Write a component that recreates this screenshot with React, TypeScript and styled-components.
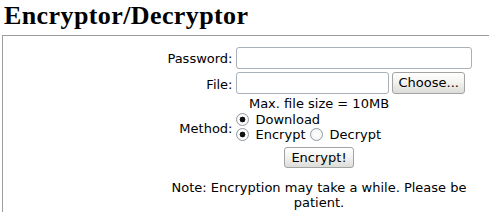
import React from 'react';
import styled, { createGlobalStyle } from 'styled-components';

const GlobalStyle = createGlobalStyle`
  html, body {
    margin: 0;
    padding: 0;
    background: #fff;
    overflow: hidden;
  }
  body {
    font-family: "DejaVu Sans", Verdana, sans-serif;
    font-size: 13px;
    color: #000;
  }
`;

const Page = styled.div`
  padding: 1px 0 0 2px;
`;

const Title = styled.h1`
  margin: 0 0 4px 2px;
  font-family: "Liberation Serif", "Times New Roman", serif;
  font-size: 26px;
  font-weight: bold;
  letter-spacing: 0.4px;
  line-height: 30px;
`;

const Panel = styled.div`
  width: 634px;
  height: 177px;
  border: 1px solid #9c9c9c;
  border-bottom: none;
  padding-top: 11px;
  box-sizing: border-box;
`;

const FormGrid = styled.form`
  display: grid;
  grid-template-columns: auto 236px;
  column-gap: 3px;
  justify-content: center;
  width: 305px;
  margin: 0 auto;
`;

const Label = styled.label<{ $top?: number }>`
  align-self: center;
  text-align: right;
  line-height: 15px;
  white-space: nowrap;
  margin-top: ${p => p.$top ?? 0}px;
  padding-top: ${p => (p.$top ? 2 : 0)}px;
`;

const TextInput = styled.input<{ $width?: number }>`
  box-sizing: border-box;
  width: ${p => (p.$width ? `${p.$width}px` : '100%')};
  height: 22px;
  margin: 0;
  padding: 1px 3px;
  border: 1px solid #a9b0b8;
  border-radius: 3px;
  background: #fff;
  font: inherit;
`;

const FieldRow = styled.div<{ $top?: number }>`
  display: flex;
  gap: 3px;
  margin-top: ${p => p.$top ?? 0}px;
`;

const Button = styled.button`
  box-sizing: border-box;
  height: 22px;
  margin: 0;
  padding: 0 6px;
  border: 1px solid #a3a3a3;
  border-radius: 3px;
  background: linear-gradient(#ffffff 0%, #f3f3f1 45%, #dcdcd8 100%);
  font: inherit;
  color: #000;
  line-height: 18px;
`;

const FileButton = styled(Button)`
  width: 73px;
`;

const Spanning = styled.div<{ $top?: number }>`
  grid-column: 1 / -1;
  text-align: center;
  line-height: 15px;
  margin-top: ${p => p.$top ?? 0}px;
`;

const RadioGroup = styled.div`
  margin-top: 1px;
`;

const RadioLine = styled.div`
  display: flex;
  align-items: center;
  height: 15px;
  white-space: nowrap;
`;

const Radio = styled.input.attrs({ type: 'radio' })`
  appearance: none;
  box-sizing: border-box;
  width: 13px;
  height: 13px;
  margin: 0 7px 0 0;
  border: 1px solid #8e99a4;
  border-radius: 50%;
  background: radial-gradient(circle, #fff 0%, #f4f4f4 70%, #dcdcdc 100%);

  &:checked {
    background: radial-gradient(circle, #111 0, #111 2.6px, #fff 3.2px, #f0f0f0 100%);
  }
`;

const RadioText = styled.span`
  margin-right: 4px;
`;

const SubmitButton = styled(Button)`
  height: 21px;
`;

const Note = styled(Spanning)`
  margin-top: 12px;
`;

export default function App() {
  return (
    <>
      <GlobalStyle />
      <Page>
        <Title>Encryptor/Decryptor</Title>
        <Panel>
          <FormGrid onSubmit={e => e.preventDefault()}>
            <Label htmlFor="pw">Password:</Label>
            <TextInput id="pw" type="password" />

            <Label htmlFor="file" $top={3}>File:</Label>
            <FieldRow $top={3}>
              <TextInput id="file" $width={153} readOnly />
              <FileButton type="button">Choose...</FileButton>
            </FieldRow>

            <Spanning $top={2}>Max. file size = 10MB</Spanning>

            <Label $top={1}>Method:</Label>
            <RadioGroup>
              <RadioLine>
                <Radio name="out" defaultChecked />
                <RadioText>Download</RadioText>
              </RadioLine>
              <RadioLine>
                <Radio name="mode" defaultChecked />
                <RadioText>Encrypt</RadioText>
                <Radio name="mode" />
                <RadioText>Decrypt</RadioText>
              </RadioLine>
            </RadioGroup>

            <Spanning $top={5}>
              <SubmitButton type="submit">Encrypt!</SubmitButton>
            </Spanning>

            <Note>Note: Encryption may take a while. Please be patient.</Note>
          </FormGrid>
        </Panel>
      </Page>
    </>
  );
}
